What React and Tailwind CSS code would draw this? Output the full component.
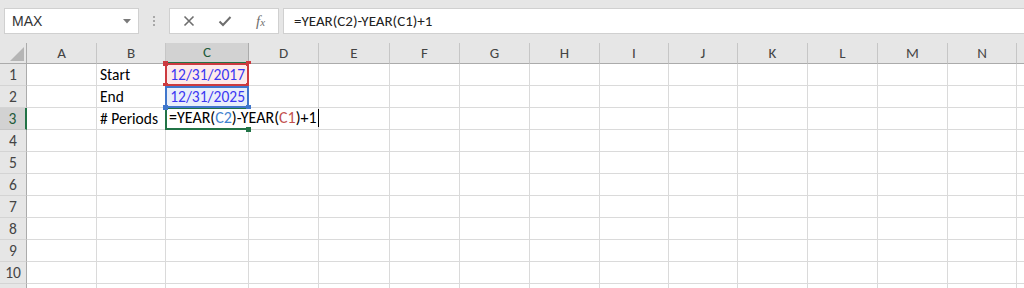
import React from "react";

const cols = [
  { l: "A", w: "w-[70px]" },
  { l: "B", w: "w-[69px]" },
  { l: "C", w: "w-[83px]" },
  { l: "D", w: "w-[70px]" },
  { l: "E", w: "w-[71px]" },
  { l: "F", w: "w-[70px]" },
  { l: "G", w: "w-[70px]" },
  { l: "H", w: "w-[70px]" },
  { l: "I", w: "w-[69px]" },
  { l: "J", w: "w-[69px]" },
  { l: "K", w: "w-[70px]" },
  { l: "L", w: "w-[70px]" },
  { l: "M", w: "w-[70px]" },
  { l: "N", w: "w-[69px]" },
  { l: "", w: "w-[70px]" },
];

const font = { fontFamily: "Carlito, 'Liberation Sans', Arial, sans-serif" };

function Corner({ c, pos }) {
  return <div className={`absolute w-[5px] h-[5px] ${c} ${pos}`} />;
}

function Toolbar() {
  return (
    <div className="h-[43px] bg-[#e6e6e6] flex items-start pt-[8px] pl-[4px] shrink-0">
      <div className="w-[135px] h-[26px] bg-white border border-[#d0d0d0] flex items-center justify-between pl-[7px] pr-[7px] shrink-0">
        <span className="text-[14px] text-[#333]" style={{ fontFamily: "'Liberation Sans', Arial, sans-serif" }}>MAX</span>
        <svg width="8" height="5" viewBox="0 0 8 5">
          <path d="M0 0 L8 0 L4 4.5 Z" fill="#7a7a7a" />
        </svg>
      </div>
      <div className="w-[30px] h-[26px] flex flex-col items-center justify-center gap-[2px] shrink-0">
        <div className="w-[2px] h-[2px] bg-[#a8a8a8]" />
        <div className="w-[2px] h-[2px] bg-[#a8a8a8]" />
        <div className="w-[2px] h-[2px] bg-[#a8a8a8]" />
      </div>
      <div className="w-[110px] h-[26px] bg-white border border-[#d0d0d0] flex items-center shrink-0">
        <div className="w-[37px] flex justify-center">
          <svg width="12" height="12" viewBox="0 0 12 12">
            <path d="M1.5 1.5 L10.5 10.5 M10.5 1.5 L1.5 10.5" stroke="#6e6e6e" strokeWidth="1.6" />
          </svg>
        </div>
        <div className="w-[36px] flex justify-center">
          <svg width="14" height="12" viewBox="0 0 14 12">
            <path d="M1.5 6.5 L5 10 L12.5 2" stroke="#6e6e6e" strokeWidth="2" fill="none" />
          </svg>
        </div>
        <div className="w-[35px] flex justify-center">
          <span className="text-[15px] italic text-[#6e6e6e] leading-none" style={{ fontFamily: "'Liberation Serif', serif" }}>
            f<span className="text-[11px]">x</span>
          </span>
        </div>
      </div>
      <div className="ml-[4px] flex-1 h-[26px] bg-white border border-[#d0d0d0] border-r-0 flex items-center pl-[10px]">
        <span className="text-[15px] text-[#222]" style={font}>=YEAR(C2)-YEAR(C1)+1</span>
      </div>
    </div>
  );
}

function HeaderRow() {
  return (
    <div className="flex h-[21px] shrink-0">
      <div className="w-[27px] h-full bg-[#e6e6e6] border-r border-b border-[#ababab] relative shrink-0">
        <svg className="absolute right-[2px] bottom-[2px]" width="14" height="14" viewBox="0 0 14 14">
          <path d="M14 0 L14 14 L0 14 Z" fill="#b5b5b5" />
        </svg>
      </div>
      {cols.map((c, i) => (
        <div
          key={i}
          className={`${c.w} h-full shrink-0 flex items-center justify-center text-[15px] ${
            c.l === "C"
              ? "bg-[#d2d2d2] border-b-2 border-b-[#217346] text-[#1e5a3a] border-r border-r-[#ababab]"
              : "bg-[#e6e6e6] border-b border-b-[#ababab] text-[#444] border-r border-r-[#c6c6c6]"
          }`}
          style={font}
        >
          {c.l}
        </div>
      ))}
    </div>
  );
}

function CellContent({ r, c }) {
  if (c === "B") {
    const t = r === 1 ? "Start" : r === 2 ? "End" : r === 3 ? "# Periods" : "";
    return <span className="pl-[3px] text-[15.5px] text-black whitespace-nowrap">{t}</span>;
  }
  if (c === "C" && r === 1) {
    return (
      <>
        <div className="absolute left-[-1px] top-[-1px] right-[-1px] bottom-[-1px] bg-[#fdeaea] border-2 border-[#cc3a3f]" />
        <Corner c="bg-[#cc3a3f]" pos="left-[-3px] top-[-3px]" />
        <Corner c="bg-[#cc3a3f]" pos="right-[-3px] top-[-3px]" />
        <Corner c="bg-[#cc3a3f]" pos="left-[-3px] bottom-[-3px]" />
        <Corner c="bg-[#cc3a3f]" pos="right-[-3px] bottom-[-3px]" />
        <span className="relative ml-auto pr-[3px] text-[15.5px] text-[#3a36f2]">12/31/2017</span>
      </>
    );
  }
  if (c === "C" && r === 2) {
    return (
      <>
        <div className="absolute left-[-1px] top-[0px] right-[-1px] bottom-[-1px] bg-[#e8eefa] border-2 border-[#3f76cc]" />
        <span className="relative ml-auto pr-[3px] text-[15.5px] text-[#3a36f2]">12/31/2025</span>
      </>
    );
  }
  if (c === "C" && r === 3) {
    return (
      <>
        <div className="absolute left-[-1px] top-[0px] right-[-1px] bottom-[-1px] border-2 border-[#217346] z-10" />
        <Corner c="bg-[#3f76cc] z-20" pos="left-[-3px] top-[-3px]" />
        <Corner c="bg-[#3f76cc] z-20" pos="right-[-3px] top-[-3px]" />
        <Corner c="bg-[#217346] z-20" pos="right-[-3px] bottom-[-3px]" />
        <span className="absolute left-[2px] top-[1px] h-[18px] flex items-center whitespace-nowrap bg-white pl-[1px] text-[16px] text-black z-20 border-r border-r-black pr-[1px]">
          =YEAR(<span className="text-[#3f83cf]">C2</span>)-YEAR(<span className="text-[#c2504d]">C1</span>)+1
        </span>
      </>
    );
  }
  return null;
}

function Row({ r }) {
  const sel = r === 3;
  return (
    <div className="flex h-[22px] shrink-0">
      <div
        className={`w-[27px] h-full shrink-0 flex items-center justify-center text-[15.5px] border-b ${
          sel
            ? "bg-[#d2d2d2] text-[#1e5a3a] border-r-2 border-r-[#217346] border-b-[#c6c6c6]"
            : "bg-[#e6e6e6] text-[#444] border-r border-r-[#ababab] border-b-[#d4d4d4]"
        }`}
        style={font}
      >
        {r <= 10 ? r : ""}
      </div>
      {cols.map((c, i) => (
        <div
          key={i}
          className={`${c.w} h-full shrink-0 relative flex items-center border-r border-b border-[#dadada] bg-white`}
          style={font}
        >
          <CellContent r={r} c={c.l} />
        </div>
      ))}
    </div>
  );
}

export default function App() {
  const rows = [1, 2, 3, 4, 5, 6, 7, 8, 9, 10, 11];
  return (
    <div className="w-[1024px] h-[288px] overflow-hidden flex flex-col bg-white" style={{ fontFamily: "'Liberation Sans', Arial, sans-serif" }}>
      <Toolbar />
      <HeaderRow />
      {rows.map((r) => (
        <Row key={r} r={r} />
      ))}
    </div>
  );
}
